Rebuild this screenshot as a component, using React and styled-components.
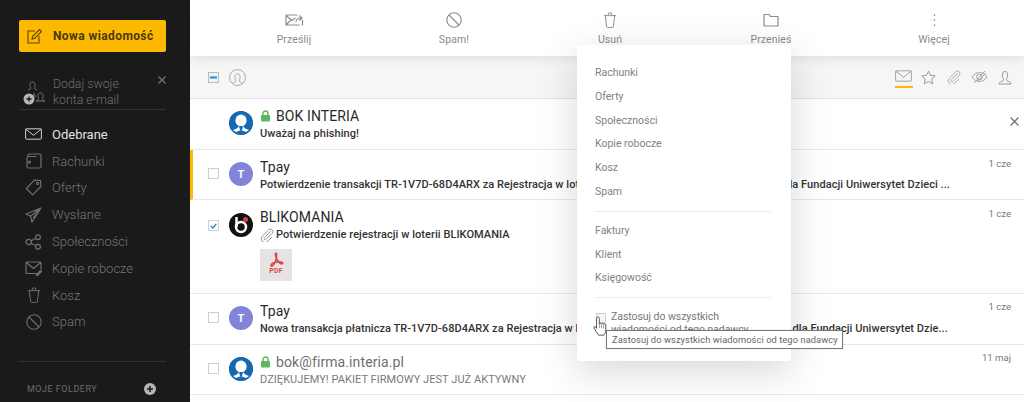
import React from 'react';
import styled, { createGlobalStyle } from 'styled-components';

const Global = createGlobalStyle`
  html, body { margin: 0; padding: 0; width: 1024px; height: 402px; overflow: hidden; background: #fff; }
  body { font-family: Roboto, "Liberation Sans", sans-serif; }
  * { box-sizing: border-box; }
`;

const Page = styled.div`
  position: relative; display: flex; width: 1024px; height: 402px; overflow: hidden;
`;
const Side = styled.aside`
  width: 190px; flex: none; height: 402px; background: #1a1a1a; padding: 20px 24px 0 19px;
  display: flex; flex-direction: column;
`;
const NewBtn = styled.div`
  width: 147px; height: 32px; background: #fdb900; border-radius: 2px; display: flex; align-items: center;
  padding-left: 8px; gap: 11px; font-size: 12px; font-weight: 700; color: #4a3a0a; letter-spacing: .4px;
  flex: none; white-space: nowrap;
`;
const Promo = styled.div`
  position: relative; margin-top: 25px; height: 33px;
  display: flex; gap: 5px; border-bottom: 1px solid #333; width: 147px;
`;
const PromoText = styled.div`
  font-size: 12.3px; line-height: 15.5px; color: #6f6f6f; font-weight: 300; white-space: nowrap;
`;
const PromoIcon = styled.div`
  width: 29px; height: 30px; flex: none;
`;
const PromoClose = styled.div`
  position: absolute; right: 0; top: -1px; width: 8px; height: 8px; display: flex;
`;
const Nav = styled.nav`
  display: flex; flex-direction: column; margin-top: 11px;
`;
const NavItem = styled.div`
  height: 26.8px; display: flex; align-items: center; gap: 10px; padding-left: 6px; font-size: 13px; font-weight: ${p => p.$active ? 400 : 300};
  color: ${p => p.$active ? '#e2e2e2' : '#767676'};
  svg { flex: none; }
`;
const IconCell = styled.span`
  width: 17px; display: flex; justify-content: center; align-items: center; flex: none;
`;
const SideRule = styled.div`
  height: 1px; background: #333; margin-top: 26px; flex: none;
`;
const FolderHead = styled.div`
  display: flex; justify-content: space-between; align-items: center; margin-top: 21px; padding-left: 8px; padding-right: 10px;
  font-size: 9px; letter-spacing: .5px; color: #6d6d6d; font-weight: 400;
`;
const Main = styled.main`
  flex: 1; min-width: 0; display: flex; flex-direction: column;
`;
const Toolbar = styled.div`
  position: relative; z-index: 2; height: 56px; flex: none; display: grid; grid-template-columns: 160px 160px 152px 170px 156px; padding-left: 24px; background: #fff;
  box-shadow: 0 3px 10px rgba(0,0,0,.09);
`;
const Tool = styled.div`
  display: flex; flex-direction: column; align-items: center; padding-top: 11px; font-size: 10.5px; color: #8b8b8b; letter-spacing: .1px;
  svg { height: 18px; }
`;
const ToolLabel = styled.div`
  margin-top: 4px; line-height: 14px;
`;
const FilterBar = styled.div`
  height: 43px; flex: none; background: #f6f6f6; border-bottom: 1px solid #e3e3e3; display: flex; align-items: center; padding-left: 18px; padding-right: 10.5px; gap: 10px;
`;
const FilterRight = styled.div`
  margin-left: auto; display: flex; align-items: center; gap: 7.25px;
`;
const FilterIcon = styled.div`
  width: 18px; height: 22px; position: relative; display: flex; align-items: center; justify-content: center;
  ${p => p.$on && 'border-bottom: 2px solid #fdb900;'}
`;
const Row = styled.div`
  position: relative; height: ${p => p.$h}px; flex: none; border-bottom: 1px solid #e9e9e9; display: flex; padding-left: ${p => p.$mark ? 15 : 18}px;
  ${p => p.$mark && 'border-left: 3px solid #fdb900;'}
  background: #fff;
`;
const CheckBox = styled.div`
  width: 11px; height: 11px; flex: none; margin-top: ${p => p.$top || 18}px; border: 1px solid #cfcfcf; background: #fff; display: flex; align-items: center; justify-content: center;
`;
const HeadCheck = styled(CheckBox)`
  margin-top: 0; background: #eef3f7; border-color: #bbb;
`;
const CheckSpacer = styled.div`
  width: 11px; flex: none;
`;
const Avatar = styled.div`
  width: 24px; height: 24px; flex: none; margin: ${p => p.$top || 12}px 0 0 10px; border-radius: 50%; background: ${p => p.$c};
  color: #fff; display: flex; align-items: center; justify-content: center; font-size: 11px; font-weight: 700; overflow: hidden;
`;
const Body = styled.div`
  margin-left: 7px; flex: 1; min-width: 0; padding-top: 7px;
`;
const Name = styled.div`
  display: flex; align-items: center; gap: 5px; height: 20px; font-size: 14px; color: ${p => p.$read ? '#707070' : '#2a2a2a'}; font-weight: 400; letter-spacing: .1px; line-height: 20px;
`;
const Subject = styled.div`
  height: 16px; line-height: 16px; font-size: 11px; white-space: nowrap; display: flex; align-items: center; gap: 2px; letter-spacing: .05px;
  color: ${p => p.$read ? '#7a7a7a' : '#333'}; font-weight: ${p => p.$read ? 400 : 500};
`;
const DateText = styled.div`
  position: absolute; right: 13px; top: ${p => p.$top || 7}px; font-size: 9.6px; color: #777;
`;
const Close = styled.div`
  position: absolute; right: 5px; top: 18px; display: flex;
`;
const Thumb = styled.div`
  width: 32px; height: 32px; margin-top: 6px; background: #e4e4e4; display: flex; flex-direction: column; align-items: center; padding-top: 3px;
  font-size: 7px; font-weight: 700; color: #e0474c; line-height: 9px; letter-spacing: .2px;
`;
const Menu = styled.div`
  position: absolute; left: 577px; top: 45px; width: 214px; height: 316px; z-index: 5; background: #fff; padding: 16px 18px 0;
  box-shadow: 0 10px 40px rgba(0,0,0,.16);
  border-radius: 0 0 3px 3px;
`;
const MenuItem = styled.div`
  height: 23.8px; font-size: 10.5px; line-height: 23.8px; color: #828282;
`;
const MenuRule = styled.div`
  height: 1px; background: #ececec; margin: ${p => p.$m};
`;
const Apply = styled.div`
  display: flex; gap: 5px; font-size: 10.5px; line-height: 13px; color: #777; letter-spacing: -.05px;
`;
const ApplyBox = styled.div`
  width: 10px; height: 10px; flex: none; margin-top: 3px; margin-left: 1px; border: 1px solid #ccc; background: #f7f7f7;
`;
const Tooltip = styled.div`
  position: absolute; z-index: 7; left: 606px; top: 330px; width: 237px; height: 19px; background: #fff; border: 1px solid #777; box-shadow: 0 0 2px rgba(0,0,0,.12);
  font-size: 9.3px; line-height: 17px; color: #666; padding-left: 5px; white-space: nowrap; letter-spacing: .08px;
`;
const Cursor = styled.svg`
  position: absolute; z-index: 8; left: 593px; top: 316px;
`;

const S = { fill: 'none', stroke: 'currentColor', strokeWidth: 1.2, strokeLinejoin: 'round', strokeLinecap: 'round' };
const Ico = ({ w = 18, h = 18, c = '#777', children, vb }) => (
  <svg width={w} height={h} viewBox={vb || `0 0 ${w} ${h}`} style={{ color: c }} {...S}>{children}</svg>
);

const Mail = ({ c, w = 22, h = 15, sw }) => (
  <svg width={w} height={h} viewBox="0 0 22 15" fill="none" stroke={c} strokeWidth={sw || 1.2} strokeLinejoin="round"><rect x=".8" y=".8" width="20.4" height="13.4" rx="1" /><path d="M1 1.2l10 8 10-8" /></svg>
);
const Trash = ({ c, w = 16, h = 18 }) => (
  <svg width={w} height={h} viewBox="0 0 16 18" fill="none" stroke={c} strokeWidth="1.1" strokeLinejoin="round"><path d="M1 4h14M2.6 4l1.5 12.6a1 1 0 0 0 1 .9h5.8a1 1 0 0 0 1-.9L13.4 4M5.5 4l1-3h3l1 3" /></svg>
);
const Ban = ({ c, s = 16 }) => (
  <svg width={s} height={s} viewBox="0 0 16 16" fill="none" stroke={c} strokeWidth="1.1"><circle cx="8" cy="8" r="7.2" /><path d="M3 3l10 10" /></svg>
);
const Lock = () => (
  <svg width="11" height="12" viewBox="0 0 10 12"><path d="M2.5 5V3.5a2.5 2.5 0 0 1 5 0V5" fill="none" stroke="#5cb85c" strokeWidth="1.4" /><rect x=".5" y="5" width="9" height="6.5" rx="1" fill="#5cb85c" /></svg>
);
const InteriaFace = () => (
  <svg width="24" height="24" viewBox="0 0 24 24">
    <circle cx="12" cy="12" r="12" fill="#1669b0" />
    <ellipse cx="12" cy="9.5" rx="5.6" ry="6" fill="#fff" />
    <path d="M4 19c3-1 5-2 6-4h4c1 2 3 3 6 4l-3 2-5-2-5 2z" fill="#fff" />
    <path d="M10 15h4l-1 4h-2z" fill="#1669b0" />
  </svg>
);
const Clip = ({ c = '#888', s = 16 }) => (
  <svg width={s} height={s} viewBox="0 0 16 16" fill="none" stroke={c} strokeWidth="1"><path d="M12.5 3.5L5 11a1.4 1.4 0 0 0 2 2l7-7a2.8 2.8 0 0 0-4-4L2.7 9.3a4.2 4.2 0 0 0 6 6l5-5" /></svg>
);
const X = ({ c, s = 8, sw = 1.1 }) => (
  <svg width={s} height={s} viewBox="0 0 8 8" stroke={c} strokeWidth={sw}><path d="M.5.5l7 7M7.5.5l-7 7" /></svg>
);

const navItems = [
  ['Odebrane', <Mail c="#e0e0e0" w={17} h={12} />, true],
  ['Rachunki', <Ico w={17} h={16} c="#6f6f6f"><path d="M3 3.5V2.5a1.5 1.5 0 0 1 1.5-1.5h10a1.5 1.5 0 0 1 1.5 1.5v11a1.5 1.5 0 0 1-1.5 1.5H3.5A1.5 1.5 0 0 1 2 13.5V5a1.5 1.5 0 0 1 1.5-1.5H11" /><circle cx="4.5" cy="9" r="1" /></Ico>],
  ['Oferty', <Ico w={17} h={17} c="#6f6f6f"><path d="M9.5 1.2l6 .3.3 6-8.2 8.3-6.3-6.3z" /><circle cx="12.6" cy="4.4" r="1.1" /></Ico>],
  ['Wysłane', <Ico w={17} h={16} c="#6f6f6f"><path d="M16 1L1 7l4.5 2.2L16 1zM16 1L7 15 5.5 9.2M16 1l-7.5 9.6" /></Ico>],
  ['Społeczności', <Ico w={17} h={16} c="#6f6f6f"><circle cx="3.8" cy="8" r="2.7" /><circle cx="13" cy="3.2" r="2.4" /><circle cx="13" cy="12.8" r="2.4" /><path d="M6.2 6.7l4.6-2.4M6.2 9.3l4.6 2.4" /></Ico>],
  ['Kopie robocze', <Ico w={17} h={15} c="#6f6f6f"><path d="M13 12.5H2a1 1 0 0 1-1-1V2a1 1 0 0 1 1-1h13a1 1 0 0 1 1 1v6M1.3 1.5L8.5 7.5l7.2-6" /><path d="M11.5 13.5l4-4 1 1-4 4h-1z" /></Ico>],
  ['Kosz', <Trash c="#6f6f6f" w={14} h={16} />],
  ['Spam', <Ban c="#6f6f6f" s={16} />],
];

const tools = [
  ['Prześlij', <Ico w={19} h={18} c="#8c8c8c" vb="0 0 19 18"><path d="M14 14H1V4h11M1 4.5l6 5 3-2.3M1 14l5-5" /><path d="M17.5 14V9M11 10.5c.5-2.5 2.5-3.5 5-3.5M14.5 4.8L17 7l-2.5 2.2" /></Ico>],
  ['Spam!', <Ban c="#8c8c8c" s={16} />],
  ['Usuń', <Trash c="#8c8c8c" w={14} h={17} />],
  ['Przenieś', <Ico w={16} h={15} c="#8c8c8c" vb="0 0 16 15"><path d="M1 2h5l1.5 2H15v9.5H1z" /></Ico>],
  ['Więcej', <Ico w={3} h={14} c="#8c8c8c" vb="0 0 3 14"><path d="M1.5 2v.4M1.5 7v.4M1.5 12v.4" strokeWidth="1.4" /></Ico>],
];

export default function App() {
  return (
    <Page>
      <Global />
      <Side>
        <NewBtn>
          <svg width="15" height="16" viewBox="0 0 15 16" fill="none" stroke="#5a4608" strokeWidth="1.1"><path d="M12 8v7H1V3h7" /><path d="M5 11l.6-2.6L12.5 1.5l2 2-6.9 6.9z" /></svg>
          Nowa wiadomość
        </NewBtn>
        <Promo>
          <PromoIcon>
            <svg width="29" height="30" viewBox="0 0 29 30" fill="none" stroke="#777" strokeWidth="1"><path d="M9 13c3-1 3-2 2.3-3.2-1-1.6-.6-4.8 2.2-4.8s3.2 3.2 2.2 4.8c-.7 1.2-.7 2.2 2.3 3.2" /><path d="M17 24c3-1 3-2 2.3-3.2-1-1.6-.6-4.8 2.2-4.8s3.2 3.2 2.2 4.8c-.7 1.2-.7 2.2 2.3 3.2z" /><path d="M15 16v3h2" /><circle cx="10" cy="22" r="5.5" fill="#b5b5b5" stroke="none" /><path d="M7.5 22h5M10 19.5v5" stroke="#1a1a1a" strokeWidth="1.3" /></svg>
          </PromoIcon>
          <PromoText>Dodaj swoje<br />konta e-mail</PromoText>
          <PromoClose><X c="#777" /></PromoClose>
        </Promo>
        <Nav>
          {navItems.map(([t, icon, on]) => (
            <NavItem key={t} $active={on}>
              <IconCell>{icon}</IconCell>
              {t}
            </NavItem>
          ))}
        </Nav>
        <SideRule />
        <FolderHead>
          MOJE FOLDERY
          <svg width="12" height="12" viewBox="0 0 12 12"><circle cx="6" cy="6" r="6" fill="#b5b5b5" /><path d="M3 6h6M6 3v6" stroke="#1a1a1a" strokeWidth="1.5" /></svg>
        </FolderHead>
      </Side>
      <Main>
        <Toolbar>
          {tools.map(([t, icon]) => (
            <Tool key={t}>
              {icon}
              <ToolLabel>{t}</ToolLabel>
            </Tool>
          ))}
        </Toolbar>
        <FilterBar>
          <HeadCheck><svg width="7" height="3" viewBox="0 0 7 3"><rect width="7" height="2" y=".5" fill="#2d88c8" /></svg></HeadCheck>
          <svg width="17" height="17" viewBox="0 0 17 17" fill="none" stroke="#a8a8a8" strokeWidth="1"><circle cx="8.5" cy="8.5" r="8" /><path d="M3.5 14c2.5-.8 3.5-1.5 3.3-3-1.3-1.5-1.5-6 1.7-6s3 4.5 1.7 6c-.2 1.5.8 2.2 3.3 3" /></svg>
          <FilterRight>
            <FilterIcon $on><Mail c="#888" w={17} h={12} sw={1} /></FilterIcon>
            <FilterIcon><svg width="15" height="15" viewBox="0 0 15 15" fill="none" stroke="#999" strokeWidth="1" strokeLinejoin="round"><path d="M7.5 1l2 4.3 4.7.6-3.4 3.2.9 4.7-4.2-2.3-4.2 2.3.9-4.7L.8 5.9l4.7-.6z" /></svg></FilterIcon>
            <FilterIcon><Clip c="#a5a5a5" s={14} /></FilterIcon>
            <FilterIcon><svg width="17" height="14" viewBox="0 0 17 14" fill="none" stroke="#a5a5a5" strokeWidth="1"><path d="M1 7c4-6 11-6 15 0-4 6-11 6-15 0z" /><circle cx="8.5" cy="7" r="2.8" /><path d="M3 13L14 1M6 12L15 3" /></svg></FilterIcon>
            <FilterIcon><svg width="14" height="15" viewBox="0 0 14 15" fill="none" stroke="#999" strokeWidth="1"><path d="M1 14h12c0-2-2.5-2.5-4-3.2-.8-.5-.8-1.500 0-2.800 1-1.800 1-6.500-2-6.500s-3 4.700-2 6.500c.8 1.300.8 2.300 0 2.800C3.500 11.500 1 12 1 14z" /></svg></FilterIcon>
          </FilterRight>
        </FilterBar>
        <Row $h={51}>
          <CheckSpacer />
          <Avatar $c="#1669b0"><InteriaFace /></Avatar>
          <Body>
            <Name><Lock /> BOK INTERIA</Name>
            <Subject>Uważaj na phishing!</Subject>
          </Body>
          <Close><X c="#777" s={9} sw={1.2} /></Close>
        </Row>
        <Row $h={50} $mark>
          <CheckBox />
          <Avatar $c="#8384d8">T</Avatar>
          <Body>
            <Name>Tpay</Name>
            <Subject>Potwierdzenie transakcji TR-1V7D-68D4ARX za Rejestracja w loterii BLIKOMANIA organizowanej również dla Fundacji Uniwersytet Dzieci ...</Subject>
          </Body>
          <DateText $top={8}>1 cze</DateText>
        </Row>
        <Row $h={94}>
          <CheckBox $top={20}><svg width="7" height="6" viewBox="0 0 7 6" fill="none" stroke="#2d88c8" strokeWidth="1.3"><path d="M.8 3l2 2 3.5-4" /></svg></CheckBox>
          <Avatar $c="#111" $top={13}>
            <svg width="24" height="24" viewBox="0 0 24 24" fill="none"><circle cx="12" cy="14" r="5" stroke="#fff" strokeWidth="2.5" /><path d="M7.5 4v10" stroke="#fff" strokeWidth="2.5" /><circle cx="16.5" cy="6.5" r="2.5" fill="#e23a44" /></svg>
          </Avatar>
          <Body>
            <Name>BLIKOMANIA</Name>
            <Subject><Clip c="#888" s={14} />Potwierdzenie rejestracji w loterii BLIKOMANIA</Subject>
            <Thumb>
              <svg width="15" height="15" viewBox="0 0 15 15" fill="none" stroke="#e0474c" strokeWidth="1.7"><path d="M7 1c-.8 0-.8 3 1 6.5s4.500 5 5.500 4-1-2-5-1.500-6.500 2-6.500 3.500 2.500.5 4.200-3.500S7.800 1 7 1z" /></svg>
              PDF
            </Thumb>
          </Body>
          <DateText $top={8}>1 cze</DateText>
        </Row>
        <Row $h={51}>
          <CheckBox />
          <Avatar $c="#8384d8">T</Avatar>
          <Body>
            <Name>Tpay</Name>
            <Subject>Nowa transakcja płatnicza TR-1V7D-68D4ARX za Rejestracja w loterii BLIKOMANIA organizowanej również dla Fundacji Uniwersytet Dzie...</Subject>
          </Body>
          <DateText>1 cze</DateText>
        </Row>
        <Row $h={50}>
          <CheckBox />
          <Avatar $c="#1669b0"><InteriaFace /></Avatar>
          <Body>
            <Name $read><Lock /> bok@firma.interia.pl</Name>
            <Subject $read>DZIĘKUJEMY! PAKIET FIRMOWY JEST JUŻ AKTYWNY</Subject>
          </Body>
          <DateText>11 maj</DateText>
        </Row>
      </Main>
      <Menu>
        {['Rachunki', 'Oferty', 'Społeczności', 'Kopie robocze', 'Kosz', 'Spam'].map(t => <MenuItem key={t}>{t}</MenuItem>)}
        <MenuRule $m="7px 2px 7px 0" />
        {['Faktury', 'Klient', 'Księgowość'].map(t => <MenuItem key={t}>{t}</MenuItem>)}
        <MenuRule $m="7px 2px 12px 0" />
        <Apply>
          <ApplyBox />
          <div>Zastosuj do wszystkich<br />wiadomości od tego nadawcy</div>
        </Apply>
      </Menu>
      <Tooltip>Zastosuj do wszystkich wiadomości od tego nadawcy</Tooltip>
      <Cursor width="16" height="21" viewBox="0 0 16 21">
        <path d="M3.5 2.200c0-1.600 2.800-1.600 2.800 0v5.800c.5-1 2-1 2.200 0 .4-.9 2-.8 2.100.2.500-.7 2.200-.5 2.200.6v5c0 2.500-1 4-2 5.400H5.500C4 17 2.500 14.500 1 12c-.6-1.200.8-2 1.700-1l.8 1.200z" fill="#fff" stroke="#333" strokeWidth=".8" strokeLinejoin="round" />
        <path d="M6.300 8v4M8.500 8.200v4M10.600 8.400v4" stroke="#555" strokeWidth=".6" fill="none" />
      </Cursor>
    </Page>
  );
}
